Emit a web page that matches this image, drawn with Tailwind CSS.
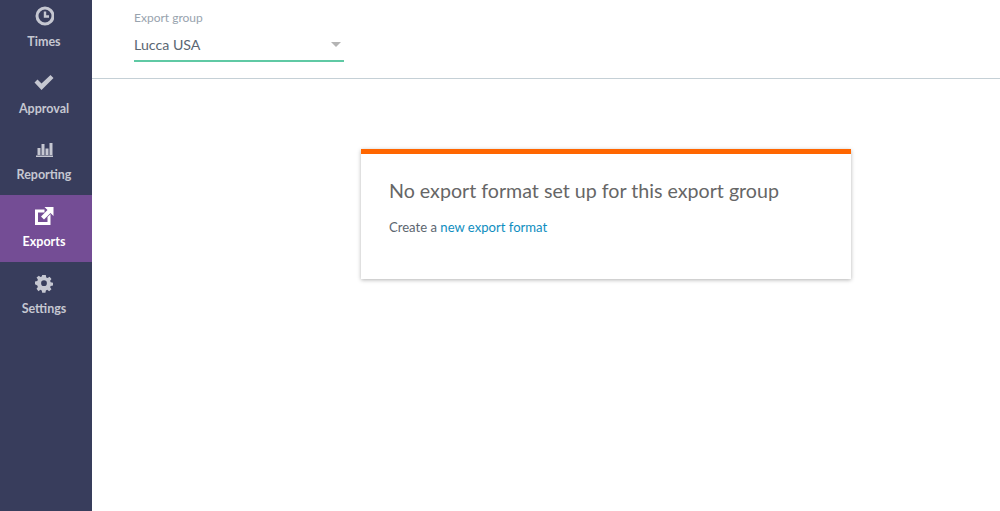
<!DOCTYPE html>
<html lang="en">
<head>
  <meta charset="UTF-8" />
  <title>Exports</title>
  <script src="https://cdn.jsdelivr.net/npm/@tailwindcss/browser@4"></script>
</head>
<body class="h-[511px] overflow-hidden bg-white font-['Lato',sans-serif]">
  <div class="flex h-[511px]">
    <nav class="w-[92px] shrink-0 overflow-hidden bg-[#383d5c]">
      <div class="-mt-[6px]">
        <a class="flex h-[67px] flex-col items-center pr-[4px] text-[#c5c7d1]">
          <svg class="mt-[12px] h-[20px] w-[20px]" viewBox="0 0 20 20" fill="none" stroke="currentColor"><circle cx="11" cy="10" r="8" stroke-width="3"/><path d="M11 5.5V10.5H15" stroke-width="2.4"/></svg>
          <span class="mt-[6px] text-[12.5px] leading-[20px] font-bold">Times</span>
        </a>
        <a class="flex h-[67px] flex-col items-center pr-[4px] text-[#c5c7d1]">
          <svg class="mt-[11px] h-[20px] w-[20px]" viewBox="0 0 20 20" fill="currentColor"><path d="M.5 10.5 3.5 7.5 7.5 11.4 16.5 3 19.5 6 7.5 18Z"/></svg>
          <span class="mt-[7px] text-[12.5px] leading-[20px] font-bold">Approval</span>
        </a>
        <a class="flex h-[67px] flex-col items-center pr-[4px] text-[#c5c7d1]">
          <svg class="mt-[11px] h-[20px] w-[20px]" viewBox="0 0 20 20" fill="currentColor"><path d="M3.5 9h3v7h-3zM7.5 5h3v11h-3zM11.5 9.5h3V16h-3zM15.5 4h3v12h-3zM2 16.5h17V18H2z"/></svg>
          <span class="mt-[6px] text-[12.5px] leading-[20px] font-bold">Reporting</span>
        </a>
        <a class="flex h-[67px] flex-col items-center bg-[#744d95] pr-[4px] text-white">
          <svg class="mt-[11px] h-[20px] w-[20px]" viewBox="0 0 20 20" fill="currentColor"><path d="M1 3.5h9.5V6.5H4v9.5h9.5V11l3-3V19H1z"/><path d="M10.5 1h9v9l-3-3-6.5 6.5-3-3 6.5-6.5z"/></svg>
          <span class="mt-[6px] text-[12.5px] leading-[20px] font-bold">Exports</span>
        </a>
        <a class="flex h-[67px] flex-col items-center pr-[4px] text-[#c5c7d1]">
          <svg class="mt-[11px] h-[20px] w-[20px]" viewBox="0 0 20 20" fill="currentColor"><path fill-rule="evenodd" d="M8 1h4l.5 2.6 1.5.6 2.2-1.5 2.1 2.6-1.5 2.1.6 1.6 2.6.4v3.2l-2.6.5-.6 1.5 1.5 2.2-2.6 2.1-2.1-1.5-1.5.6-.5 2.5H8l-.5-2.5-1.5-.6-2.2 1.5-2.1-2.6 1.5-2.1-.6-1.6L0 11.2V8l2.6-.5.6-1.5-1.5-2.2 2.6-2.1L6 3.2l1.5-.6zM10 6.8a3.2 3.2 0 1 0 0 6.4 3.2 3.2 0 0 0 0-6.4z" transform="translate(1 1.2) scale(.9)"/></svg>
          <span class="mt-[6px] text-[12.5px] leading-[20px] font-bold">Settings</span>
        </a>
      </div>
    </nav>
    <main class="flex-1">
      <header class="h-[79px] border-b border-[#c5d0d6] pl-[42px] pt-[10px]">
        <div class="w-[210px]">
          <label class="block text-[12px] leading-[16px] text-[#98a3ae]">Export group</label>
          <div class="mt-[2px] flex h-[34px] items-center justify-between border-b-2 border-[#5fc9a4] pr-[3px]">
            <span class="mt-[1px] text-[14.2px] text-[#5a6672]">Lucca USA</span>
            <span class="mt-[1px] h-0 w-0 border-x-[5px] border-t-[5px] border-x-transparent border-t-[#b4b4b4]"></span>
          </div>
        </div>
      </header>
      <div class="ml-[269px] mt-[70px] h-[130px] w-[490px] border-t-[5px] border-[#ff6600] bg-white px-[28px] pt-[25px] shadow-[0_1px_4px_rgba(0,0,0,0.3)]">
        <h1 class="text-[19.65px] leading-[24px] text-[#666666]">No export format set up for this export group</h1>
        <p class="mt-[14px] text-[13.1px] leading-[20px] text-[#5c6670]">Create a <a class="text-[#0f8ec0]">new export format</a></p>
      </div>
    </main>
  </div>
</body>
</html>
